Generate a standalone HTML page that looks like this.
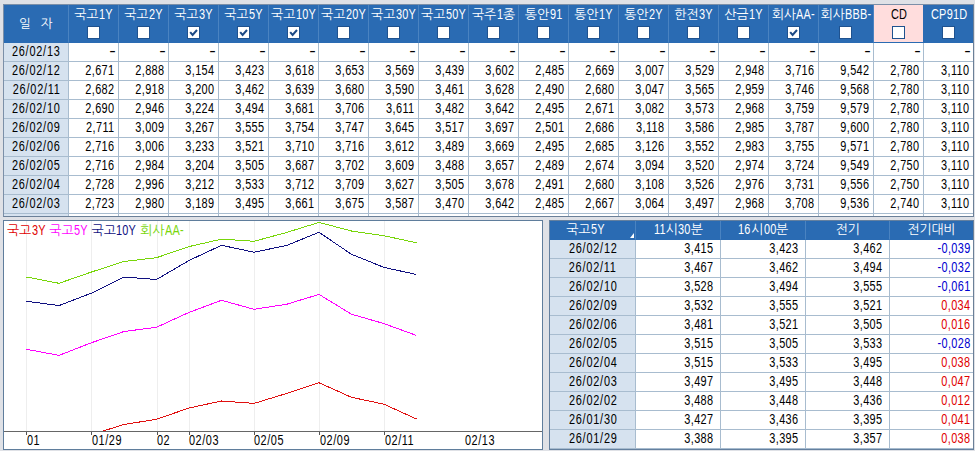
<!DOCTYPE html>
<html lang="ko"><head><meta charset="utf-8"><title>금리</title>
<style>
html,body{margin:0;padding:0}
body{width:975px;height:451px;overflow:hidden;background:#dfe1e6;position:relative;
 font-family:"Liberation Sans","NanumGothic","Noto Sans CJK KR",sans-serif;font-size:12px;color:#000}
.grid{display:grid}
.grid>div{box-sizing:border-box;overflow:hidden;white-space:nowrap}
#t1{position:absolute;left:3px;top:4px;width:970px;height:211px;border:1px solid #7b8fa8;border-right:0;border-bottom:1px solid #6b8098;background:#fff}
#t2{position:absolute;left:549px;top:220px;width:424px;height:228px;border:1px solid #64809f;border-right:0;border-bottom:1px solid #64809f;background:#fff}
.h{background:#2a6bb3;color:#fff;border-right:1px solid #4a83c1;border-bottom:1px solid #2a6bb3;text-align:center;position:relative}
#t1 .h>span{position:absolute;left:0;right:0;top:1px;line-height:16px;font-size:13px;letter-spacing:-.1px}
#t1 .h.hd>span{top:11.4px;word-spacing:5px;font-size:12.5px;letter-spacing:.7px}
#t1 .h.cd{background:#ffdddd;color:#000;border-right-color:#2a6bb3}
.cb{position:absolute;left:50%;margin-left:-7px;top:21px;width:11px;height:11px;border:1px solid #1f528f;background:#fff;display:block}
.cb svg{display:block}
.cb path{fill:none;stroke:#1d4a85;stroke-width:2}
.d{background:#d6e2ef;border-right:1px solid #a8bccf;border-bottom:1px solid #a8bccf;text-align:center;line-height:19px}
.c{background:#fff;border-right:1px solid #a8bccf;border-bottom:1px solid #a8bccf;text-align:right;padding-right:3.5px;line-height:19px}
#t2 .h>span{line-height:18px;font-size:13px;letter-spacing:-.1px}
#t2 .h.first>span{margin-right:14px}
#t2 .c{padding-right:6.5px}
#t2 .c.l{padding-right:2px}
.tri{position:absolute;right:1px;bottom:1px;width:0;height:0;border-left:4px solid transparent;border-bottom:5px solid #fff}
.neg{color:#0000d0}
.pos{color:#e00000}
#chart{position:absolute;left:3px;top:220px;width:538px;height:228px;border:1px solid #5f7d9c;background:#fff}
#chart svg{position:absolute;left:0;top:0}
.lg{position:absolute;left:3px;top:1.2px;word-spacing:.2px;font-size:13px;letter-spacing:-.1px;line-height:16px;white-space:nowrap}

.n{display:inline-block;font-size:14px;transform:scaleX(.78);line-height:17px;vertical-align:top}
.c .n{transform-origin:100% 50%;letter-spacing:.5px}
.d .n{transform-origin:50% 50%;letter-spacing:1px;margin-right:-1px}
.c .n.m{transform:scaleX(1.4) scaleY(1.2);margin-right:-.8px;letter-spacing:0;position:relative;top:-1.2px}
.nb{border-bottom:0 !important}
#t1::after,#t2::after{content:'';position:absolute;right:0;top:0;bottom:0;width:1px;background:#6b8098}
.a{display:inline-block;font-size:14px;letter-spacing:.3px;margin-left:.5px;transform:scaleX(.78);transform-origin:0 50%;white-space:nowrap;line-height:16px;vertical-align:baseline}

</style></head><body>
<div id="t1">
<div class="grid" style="grid-template-columns:65px 50px 50px 50px 50px 50px 50px 50px 50px 50px 50px 50px 50px 50px 50px 50px 55px 50px 50px;grid-template-rows:38px repeat(9,19px) 2px">
<div class="h hd"><span>일 자</span></div><div class="h"><span>국고<span class="a" style="width:13.8px">1Y</span></span><i class="cb"></i></div><div class="h"><span>국고<span class="a" style="width:13.8px">2Y</span></span><i class="cb"></i></div><div class="h"><span>국고<span class="a" style="width:13.8px">3Y</span></span><i class="cb on"><svg viewBox="0 0 11 11" width="11" height="11"><path d="M2.2 5.2 L4.6 8 L9 3" /></svg></i></div><div class="h"><span>국고<span class="a" style="width:13.8px">5Y</span></span><i class="cb on"><svg viewBox="0 0 11 11" width="11" height="11"><path d="M2.2 5.2 L4.6 8 L9 3" /></svg></i></div><div class="h"><span>국고<span class="a" style="width:20.1px">10Y</span></span><i class="cb on"><svg viewBox="0 0 11 11" width="11" height="11"><path d="M2.2 5.2 L4.6 8 L9 3" /></svg></i></div><div class="h"><span>국고<span class="a" style="width:20.1px">20Y</span></span><i class="cb"></i></div><div class="h"><span>국고<span class="a" style="width:20.1px">30Y</span></span><i class="cb"></i></div><div class="h"><span>국고<span class="a" style="width:20.1px">50Y</span></span><i class="cb"></i></div><div class="h"><span>국주<span class="a" style="width:6.3px">1</span>종</span><i class="cb"></i></div><div class="h"><span>통안<span class="a" style="width:12.6px">91</span></span><i class="cb"></i></div><div class="h"><span>통안<span class="a" style="width:13.8px">1Y</span></span><i class="cb"></i></div><div class="h"><span>통안<span class="a" style="width:13.8px">2Y</span></span><i class="cb"></i></div><div class="h"><span>한전<span class="a" style="width:13.8px">3Y</span></span><i class="cb"></i></div><div class="h"><span>산금<span class="a" style="width:13.8px">1Y</span></span><i class="cb"></i></div><div class="h"><span>회사<span class="a" style="width:18.9px">AA-</span></span><i class="cb on"><svg viewBox="0 0 11 11" width="11" height="11"><path d="M2.2 5.2 L4.6 8 L9 3" /></svg></i></div><div class="h"><span>회사<span class="a" style="width:26.4px">BBB-</span></span><i class="cb"></i></div><div class="h cd"><span><span class="a" style="width:16.2px">CD</span></span><i class="cb"></i></div><div class="h"><span><span class="a" style="width:36.4px">CP91D</span></span><i class="cb"></i></div>
<div class="d"><span class="n">26/02/13</span></div><div class="c"><span class="n m">-</span></div><div class="c"><span class="n m">-</span></div><div class="c"><span class="n m">-</span></div><div class="c"><span class="n m">-</span></div><div class="c"><span class="n m">-</span></div><div class="c"><span class="n m">-</span></div><div class="c"><span class="n m">-</span></div><div class="c"><span class="n m">-</span></div><div class="c"><span class="n m">-</span></div><div class="c"><span class="n m">-</span></div><div class="c"><span class="n m">-</span></div><div class="c"><span class="n m">-</span></div><div class="c"><span class="n m">-</span></div><div class="c"><span class="n m">-</span></div><div class="c"><span class="n m">-</span></div><div class="c"><span class="n m">-</span></div><div class="c"><span class="n m">-</span></div><div class="c"><span class="n m">-</span></div>
<div class="d"><span class="n">26/02/12</span></div><div class="c"><span class="n">2,671</span></div><div class="c"><span class="n">2,888</span></div><div class="c"><span class="n">3,154</span></div><div class="c"><span class="n">3,423</span></div><div class="c"><span class="n">3,618</span></div><div class="c"><span class="n">3,653</span></div><div class="c"><span class="n">3,569</span></div><div class="c"><span class="n">3,439</span></div><div class="c"><span class="n">3,602</span></div><div class="c"><span class="n">2,485</span></div><div class="c"><span class="n">2,669</span></div><div class="c"><span class="n">3,007</span></div><div class="c"><span class="n">3,529</span></div><div class="c"><span class="n">2,948</span></div><div class="c"><span class="n">3,716</span></div><div class="c"><span class="n">9,542</span></div><div class="c"><span class="n">2,780</span></div><div class="c"><span class="n">3,110</span></div>
<div class="d"><span class="n">26/02/11</span></div><div class="c"><span class="n">2,682</span></div><div class="c"><span class="n">2,918</span></div><div class="c"><span class="n">3,200</span></div><div class="c"><span class="n">3,462</span></div><div class="c"><span class="n">3,639</span></div><div class="c"><span class="n">3,680</span></div><div class="c"><span class="n">3,590</span></div><div class="c"><span class="n">3,461</span></div><div class="c"><span class="n">3,628</span></div><div class="c"><span class="n">2,490</span></div><div class="c"><span class="n">2,680</span></div><div class="c"><span class="n">3,047</span></div><div class="c"><span class="n">3,565</span></div><div class="c"><span class="n">2,959</span></div><div class="c"><span class="n">3,746</span></div><div class="c"><span class="n">9,568</span></div><div class="c"><span class="n">2,780</span></div><div class="c"><span class="n">3,110</span></div>
<div class="d"><span class="n">26/02/10</span></div><div class="c"><span class="n">2,690</span></div><div class="c"><span class="n">2,946</span></div><div class="c"><span class="n">3,224</span></div><div class="c"><span class="n">3,494</span></div><div class="c"><span class="n">3,681</span></div><div class="c"><span class="n">3,706</span></div><div class="c"><span class="n">3,611</span></div><div class="c"><span class="n">3,482</span></div><div class="c"><span class="n">3,642</span></div><div class="c"><span class="n">2,495</span></div><div class="c"><span class="n">2,671</span></div><div class="c"><span class="n">3,082</span></div><div class="c"><span class="n">3,573</span></div><div class="c"><span class="n">2,968</span></div><div class="c"><span class="n">3,759</span></div><div class="c"><span class="n">9,579</span></div><div class="c"><span class="n">2,780</span></div><div class="c"><span class="n">3,110</span></div>
<div class="d"><span class="n">26/02/09</span></div><div class="c"><span class="n">2,711</span></div><div class="c"><span class="n">3,009</span></div><div class="c"><span class="n">3,267</span></div><div class="c"><span class="n">3,555</span></div><div class="c"><span class="n">3,754</span></div><div class="c"><span class="n">3,747</span></div><div class="c"><span class="n">3,645</span></div><div class="c"><span class="n">3,517</span></div><div class="c"><span class="n">3,697</span></div><div class="c"><span class="n">2,501</span></div><div class="c"><span class="n">2,686</span></div><div class="c"><span class="n">3,118</span></div><div class="c"><span class="n">3,586</span></div><div class="c"><span class="n">2,985</span></div><div class="c"><span class="n">3,787</span></div><div class="c"><span class="n">9,600</span></div><div class="c"><span class="n">2,780</span></div><div class="c"><span class="n">3,110</span></div>
<div class="d"><span class="n">26/02/06</span></div><div class="c"><span class="n">2,716</span></div><div class="c"><span class="n">3,006</span></div><div class="c"><span class="n">3,233</span></div><div class="c"><span class="n">3,521</span></div><div class="c"><span class="n">3,710</span></div><div class="c"><span class="n">3,716</span></div><div class="c"><span class="n">3,612</span></div><div class="c"><span class="n">3,489</span></div><div class="c"><span class="n">3,669</span></div><div class="c"><span class="n">2,495</span></div><div class="c"><span class="n">2,685</span></div><div class="c"><span class="n">3,126</span></div><div class="c"><span class="n">3,552</span></div><div class="c"><span class="n">2,983</span></div><div class="c"><span class="n">3,755</span></div><div class="c"><span class="n">9,571</span></div><div class="c"><span class="n">2,780</span></div><div class="c"><span class="n">3,110</span></div>
<div class="d"><span class="n">26/02/05</span></div><div class="c"><span class="n">2,716</span></div><div class="c"><span class="n">2,984</span></div><div class="c"><span class="n">3,204</span></div><div class="c"><span class="n">3,505</span></div><div class="c"><span class="n">3,687</span></div><div class="c"><span class="n">3,702</span></div><div class="c"><span class="n">3,609</span></div><div class="c"><span class="n">3,488</span></div><div class="c"><span class="n">3,657</span></div><div class="c"><span class="n">2,489</span></div><div class="c"><span class="n">2,674</span></div><div class="c"><span class="n">3,094</span></div><div class="c"><span class="n">3,520</span></div><div class="c"><span class="n">2,974</span></div><div class="c"><span class="n">3,724</span></div><div class="c"><span class="n">9,549</span></div><div class="c"><span class="n">2,750</span></div><div class="c"><span class="n">3,110</span></div>
<div class="d"><span class="n">26/02/04</span></div><div class="c"><span class="n">2,728</span></div><div class="c"><span class="n">2,996</span></div><div class="c"><span class="n">3,212</span></div><div class="c"><span class="n">3,533</span></div><div class="c"><span class="n">3,712</span></div><div class="c"><span class="n">3,709</span></div><div class="c"><span class="n">3,627</span></div><div class="c"><span class="n">3,505</span></div><div class="c"><span class="n">3,678</span></div><div class="c"><span class="n">2,491</span></div><div class="c"><span class="n">2,680</span></div><div class="c"><span class="n">3,108</span></div><div class="c"><span class="n">3,526</span></div><div class="c"><span class="n">2,976</span></div><div class="c"><span class="n">3,731</span></div><div class="c"><span class="n">9,556</span></div><div class="c"><span class="n">2,750</span></div><div class="c"><span class="n">3,110</span></div>
<div class="d"><span class="n">26/02/03</span></div><div class="c"><span class="n">2,723</span></div><div class="c"><span class="n">2,980</span></div><div class="c"><span class="n">3,189</span></div><div class="c"><span class="n">3,495</span></div><div class="c"><span class="n">3,661</span></div><div class="c"><span class="n">3,675</span></div><div class="c"><span class="n">3,587</span></div><div class="c"><span class="n">3,470</span></div><div class="c"><span class="n">3,642</span></div><div class="c"><span class="n">2,485</span></div><div class="c"><span class="n">2,667</span></div><div class="c"><span class="n">3,064</span></div><div class="c"><span class="n">3,497</span></div><div class="c"><span class="n">2,968</span></div><div class="c"><span class="n">3,708</span></div><div class="c"><span class="n">9,536</span></div><div class="c"><span class="n">2,740</span></div><div class="c"><span class="n">3,110</span></div>
<div class="d nb"></div><div class="c nb"></div><div class="c nb"></div><div class="c nb"></div><div class="c nb"></div><div class="c nb"></div><div class="c nb"></div><div class="c nb"></div><div class="c nb"></div><div class="c nb"></div><div class="c nb"></div><div class="c nb"></div><div class="c nb"></div><div class="c nb"></div><div class="c nb"></div><div class="c nb"></div><div class="c nb"></div><div class="c nb"></div><div class="c nb"></div>
</div></div>
<div id="chart"><svg width="538" height="228" viewBox="0 0 538 228">
<defs><clipPath id="cp"><rect x="0" y="0" width="538" height="210"/></clipPath></defs>
<rect x="22" y="0" width="1" height="210" fill="#eeeeee"/>
<rect x="22" y="210" width="1" height="4" fill="#555"/>
<rect x="87" y="0" width="1" height="210" fill="#eeeeee"/>
<rect x="87" y="210" width="1" height="4" fill="#555"/>
<rect x="153" y="0" width="1" height="210" fill="#eeeeee"/>
<rect x="153" y="210" width="1" height="4" fill="#555"/>
<rect x="185" y="0" width="1" height="210" fill="#eeeeee"/>
<rect x="185" y="210" width="1" height="4" fill="#555"/>
<rect x="250" y="0" width="1" height="210" fill="#eeeeee"/>
<rect x="250" y="210" width="1" height="4" fill="#555"/>
<rect x="315" y="0" width="1" height="210" fill="#eeeeee"/>
<rect x="315" y="210" width="1" height="4" fill="#555"/>
<rect x="380" y="0" width="1" height="210" fill="#eeeeee"/>
<rect x="380" y="210" width="1" height="4" fill="#555"/>
<rect x="0" y="210" width="538" height="1" fill="#666"/>
<g clip-path="url(#cp)">
<polyline points="22.5,56.0 55.0,62.3 87.5,51.0 120.0,40.5 152.5,36.7 185.0,25.6 217.5,18.1 250.0,20.3 282.5,11.5 315.0,1.4 347.5,10.0 380.0,14.7 412.5,21.8" fill="none" stroke="#78d60a" stroke-width="1" shape-rendering="crispEdges"/>
<polyline points="22.5,80.2 55.0,84.6 87.5,72.1 120.0,56.0 152.5,58.5 185.0,39.5 217.5,24.3 250.0,31.2 282.5,24.5 315.0,11.3 347.5,33.3 380.0,46.4 412.5,53.5" fill="none" stroke="#101080" stroke-width="1" shape-rendering="crispEdges"/>
<polyline points="22.5,128.3 55.0,134.4 87.5,121.7 120.0,110.5 152.5,106.3 185.0,91.4 217.5,79.3 250.0,88.3 282.5,83.3 315.0,73.4 347.5,93.2 380.0,102.6 412.5,114.5" fill="none" stroke="#ff00ff" stroke-width="1" shape-rendering="crispEdges"/>
<polyline points="22.5,227.0 55.0,231.0 87.5,213.6 120.0,203.5 152.5,198.3 185.0,187.0 217.5,180.0 250.0,182.4 282.5,172.5 315.0,161.8 347.5,176.3 380.0,183.2 412.5,198.0" fill="none" stroke="#e01010" stroke-width="1" shape-rendering="crispEdges"/>
</g>
<g font-size="14" fill="#000" font-family="Liberation Sans, NanumGothic, sans-serif">
<text transform="translate(23,223.5) scale(.78,1)" letter-spacing=".7">01</text>
<text transform="translate(88,223.5) scale(.78,1)" letter-spacing=".7">01/29</text>
<text transform="translate(153,223.5) scale(.78,1)" letter-spacing=".7">02</text>
<text transform="translate(185,223.5) scale(.78,1)" letter-spacing=".7">02/03</text>
<text transform="translate(250,223.5) scale(.78,1)" letter-spacing=".7">02/05</text>
<text transform="translate(316,223.5) scale(.78,1)" letter-spacing=".7">02/09</text>
<text transform="translate(381,223.5) scale(.78,1)" letter-spacing=".7">02/11</text>
<text transform="translate(461,223.5) scale(.78,1)" letter-spacing=".7">02/13</text>
</g></svg>
<div class="lg"><span style="color:#e00000">국고<span class="a" style="width:13.8px">3Y</span></span> <span style="color:#ff00ff">국고<span class="a" style="width:13.8px">5Y</span></span> <span style="color:#101080">국고<span class="a" style="width:20.1px">10Y</span></span> <span style="color:#78d60a">회사<span class="a" style="width:18.9px">AA-</span></span></div>
</div>
<div id="t2">
<div class="grid" style="grid-template-columns:86px 85px 85px 84px 84px;grid-template-rows:19px repeat(11,19px)">
<div class="h first"><span>국고<span class="a" style="width:13.8px">5Y</span></span><b class="tri"></b></div><div class="h"><span><span class="a" style="width:11.8px">11</span>시<span class="a" style="width:12.6px">30</span>분</span></div><div class="h"><span><span class="a" style="width:12.6px">16</span>시<span class="a" style="width:12.6px">00</span>분</span></div><div class="h"><span>전기</span></div><div class="h"><span>전기대비</span></div>
<div class="d"><span class="n">26/02/12</span></div><div class="c"><span class="n">3,415</span></div><div class="c"><span class="n">3,423</span></div><div class="c"><span class="n">3,462</span></div><div class="c l neg"><span class="n">-0,039</span></div>
<div class="d"><span class="n">26/02/11</span></div><div class="c"><span class="n">3,467</span></div><div class="c"><span class="n">3,462</span></div><div class="c"><span class="n">3,494</span></div><div class="c l neg"><span class="n">-0,032</span></div>
<div class="d"><span class="n">26/02/10</span></div><div class="c"><span class="n">3,528</span></div><div class="c"><span class="n">3,494</span></div><div class="c"><span class="n">3,555</span></div><div class="c l neg"><span class="n">-0,061</span></div>
<div class="d"><span class="n">26/02/09</span></div><div class="c"><span class="n">3,532</span></div><div class="c"><span class="n">3,555</span></div><div class="c"><span class="n">3,521</span></div><div class="c l pos"><span class="n">0,034</span></div>
<div class="d"><span class="n">26/02/06</span></div><div class="c"><span class="n">3,481</span></div><div class="c"><span class="n">3,521</span></div><div class="c"><span class="n">3,505</span></div><div class="c l pos"><span class="n">0,016</span></div>
<div class="d"><span class="n">26/02/05</span></div><div class="c"><span class="n">3,515</span></div><div class="c"><span class="n">3,505</span></div><div class="c"><span class="n">3,533</span></div><div class="c l neg"><span class="n">-0,028</span></div>
<div class="d"><span class="n">26/02/04</span></div><div class="c"><span class="n">3,515</span></div><div class="c"><span class="n">3,533</span></div><div class="c"><span class="n">3,495</span></div><div class="c l pos"><span class="n">0,038</span></div>
<div class="d"><span class="n">26/02/03</span></div><div class="c"><span class="n">3,497</span></div><div class="c"><span class="n">3,495</span></div><div class="c"><span class="n">3,448</span></div><div class="c l pos"><span class="n">0,047</span></div>
<div class="d"><span class="n">26/02/02</span></div><div class="c"><span class="n">3,488</span></div><div class="c"><span class="n">3,448</span></div><div class="c"><span class="n">3,436</span></div><div class="c l pos"><span class="n">0,012</span></div>
<div class="d"><span class="n">26/01/30</span></div><div class="c"><span class="n">3,427</span></div><div class="c"><span class="n">3,436</span></div><div class="c"><span class="n">3,395</span></div><div class="c l pos"><span class="n">0,041</span></div>
<div class="d"><span class="n">26/01/29</span></div><div class="c"><span class="n">3,388</span></div><div class="c"><span class="n">3,395</span></div><div class="c"><span class="n">3,357</span></div><div class="c l pos"><span class="n">0,038</span></div>
</div></div>
</body></html>
